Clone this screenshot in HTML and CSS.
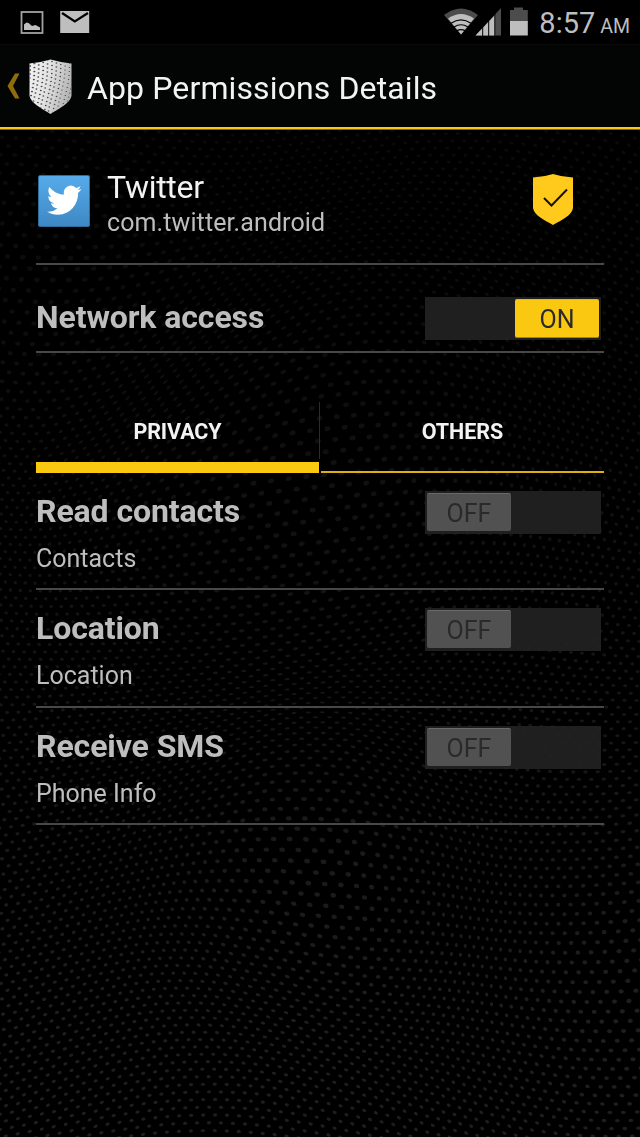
FILE: index.html
```html
<!DOCTYPE html>
<html lang="en">
<head>
    <meta charset="UTF-8">
    <title>App Permissions Details</title>
    <link rel="stylesheet" href="styles.css">
</head>
<body>
    <canvas id="dots" class="dots" width="640" height="1137"></canvas>
    <div class="statusbar">
        <svg class="status-image" width="24" height="24" viewBox="0 0 24 24">
            <rect x="1.500" y="1" width="21" height="21" fill="none" stroke="#a2a2a2" stroke-width="1.800"/>
            <path d="M4 19v-5.500l2.500-2 2 .4 3.500 3 3.500-1 4.500 2.600V19z" fill="#bebebe"/>
        </svg>
        <svg class="status-mail" width="30" height="23" viewBox="0 0 30 23">
            <rect x="0.200" y="0" width="29" height="22" fill="#bebebe"/>
            <path d="M2 2l12.800 8.500L28 2" fill="none" stroke="#000" stroke-width="2.300"/>
        </svg>
        <div class="status-right">
            <svg width="60" height="30" viewBox="0 0 60 30">
                <path d="M1 8Q18 -5 35 8L18 27.500z" fill="#4c4c4c"/>
                <path d="M5 11.500Q18 2.500 31 11.500L18 27.500z" fill="#bebebe"/>
                <path d="M8 16.300Q18 9.500 28 16.300M11 20Q18 15.500 25 20M14 23.600Q18 21.500 22 23.600" fill="none" stroke="#000" stroke-width="1.200"/>
                <path d="M32.500 28.500L58 1v27.500z" fill="#4c4c4c"/>
                <path d="M32.500 28.500L52 8V28.500z" fill="#bebebe"/>
                <path d="M39.700 18v12M45.700 12v18M51.800 5v25" stroke="#000" stroke-width="1"/>
            </svg>
            <svg class="battery" width="19" height="29" viewBox="0 0 19 29">
                <path d="M1 3h4V0.500h9V3h4.800v12H1z" fill="#4c4c4c"/>
                <rect x="1" y="14" width="17.800" height="14.500" fill="#bebebe"/>
            </svg>
            <span class="clock">8:57</span>
            <span class="ampm">AM</span>
        </div>
    </div>

    <div class="actionbar">
        <svg class="back" width="13" height="26" viewBox="0 0 13 26">
            <path d="M8 0.500h4.500L6 13l6.500 12.500H8L0.500 13z" fill="#8e6e0c"/>
        </svg>
        <svg class="logo" width="44" height="56" viewBox="0 0 44 56">
            <defs>
                <linearGradient id="silver" x1="0" y1="0" x2="1" y2="0.300">
                    <stop offset="0" stop-color="#f4f4f4"/>
                    <stop offset="0.500" stop-color="#e2e2e2"/>
                    <stop offset="1" stop-color="#b4b4b4"/>
                </linearGradient>
                <clipPath id="shield">
                    <path d="M0.500 4.500Q12 3.500 21.500 0.500Q32 3.500 42.500 4.500V37C41 44 31 49 21.500 55C12 49 2 44 0.500 37z"/>
                </clipPath>
            </defs>
            <g clip-path="url(#shield)">
                <rect width="44" height="56" fill="url(#silver)"/>
                <g id="logo-dots"></g>
            </g>
        </svg>
        <h1>App Permissions Details</h1>
    </div>

    <main>
        <section class="app">
            <svg class="app-icon" width="52" height="52" viewBox="0 0 52 52">
                <defs>
                    <linearGradient id="sky" x1="0" y1="0" x2="0" y2="1">
                        <stop offset="0" stop-color="#57abea"/>
                        <stop offset="1" stop-color="#3d88c4"/>
                    </linearGradient>
                </defs>
                <rect x="0.500" y="0.500" width="51" height="51" rx="1.500" fill="url(#sky)" stroke="#2f6c9e"/>
                <g transform="translate(9 7.200) scale(1.440 1.500)">
                    <path d="M23.950 4.570a10 10 0 0 1-2.820.770 4.960 4.960 0 0 0 2.160-2.720c-.950.560-2 .950-3.130 1.180a4.920 4.920 0 0 0-8.380 4.480C7.690 8.090 4.070 6.130 1.640 3.160a4.820 4.820 0 0 0-.670 2.480c0 1.710.870 3.210 2.190 4.100a4.900 4.900 0 0 1-2.230-.620v.060a4.920 4.920 0 0 0 3.950 4.830 5 5 0 0 1-2.210.080 4.940 4.940 0 0 0 4.600 3.420A9.870 9.870 0 0 1 0 19.540a13.990 13.990 0 0 0 7.550 2.210c9.050 0 14-7.500 14-13.980 0-.210 0-.420-.020-.630a9.940 9.940 0 0 0 2.420-2.570z" fill="#fff"/>
                </g>
            </svg>
            <div class="app-text">
                <div class="app-name">Twitter</div>
                <div class="app-package">com.twitter.android</div>
            </div>
            <svg class="trusted" width="42" height="52" viewBox="0 0 42 52">
                <path d="M1 3.500Q12 3 21 0Q30 3 41 3.500V34C40 41 30 46 21 51C12 46 2 41 1 34z" fill="#ffca1c"/>
                <path d="M12 24l7.500 7.500L35 15.500" fill="none" stroke="#15140c" stroke-width="2"/>
            </svg>
        </section>

        <section class="network">
            <h2>Network access</h2>
            <div class="switch on"><span class="thumb">ON</span></div>
        </section>

        <nav class="tabs">
            <div class="tab active">PRIVACY</div>
            <div class="separator"></div>
            <div class="tab">OTHERS</div>
        </nav>

        <section class="permission">
            <div>
                <h2>Read contacts</h2>
                <p>Contacts</p>
            </div>
            <div class="switch"><span class="thumb">OFF</span></div>
        </section>
        <section class="permission">
            <div>
                <h2>Location</h2>
                <p>Location</p>
            </div>
            <div class="switch"><span class="thumb">OFF</span></div>
        </section>
        <section class="permission">
            <div>
                <h2>Receive SMS</h2>
                <p>Phone Info</p>
            </div>
            <div class="switch"><span class="thumb">OFF</span></div>
        </section>
    </main>
    <script src="script.js"></script>
</body>
</html>
```
FILE: styles.css
```css
body {
    margin: 0;
    height: 1137px;
    overflow: hidden;
    background-color: #000;
    color: #bebebe;
    font-family: Roboto, "Liberation Sans", sans-serif;
}

h1, h2, p {
    margin: 0;
    white-space: nowrap;
}

/* dotted wallpaper behind everything */
.dots {
    position: absolute;
    top: 0;
    left: 0;
    z-index: -1;
}

.statusbar {
    display: flex;
    box-sizing: border-box;
    height: 45px;
    padding-left: 20px;
    background-color: #000;
    border-bottom: 1px solid #0b0b0b;
}

.status-image {
    margin-top: 11px;
}

.status-mail {
    margin: 11px 0 0 16px;
}

.status-right {
    display: flex;
    margin-left: auto;
    padding: 7px 10px 0 0;
}

.battery {
    margin-left: 6px;
}

.clock {
    margin-left: 11px;
    font-size: 29px;
    line-height: 32px;
}

.ampm {
    margin-left: 5px;
    font-size: 19.500px;
    line-height: 39px;
}

.actionbar {
    display: flex;
    align-items: center;
    height: 82px;
    padding-left: 7px;
    background-color: #030404;
    border-bottom: 2px solid #fac711;
    box-shadow: 0 1px 0 #806409;
}

.logo {
    margin: 1px 0 0 9px;
}

.actionbar h1 {
    margin: 3px 0 0 14px;
    color: #f3f3f3;
    font-size: 32px;
    font-weight: 400;
    letter-spacing: 0.120px;
    line-height: 38px;
}

main {
    padding: 0 36px;
}

.app {
    display: flex;
    box-sizing: border-box;
    height: 136px;
    padding: 46px 30px 0 2px;
    border-bottom: 2px solid #484848;
}

.app-text {
    margin: -7px auto 0 17px;
}

.app-name {
    color: #f3f3f3;
    font-size: 32px;
    letter-spacing: -0.300px;
    line-height: 38px;
}

.app-package {
    font-size: 25px;
    letter-spacing: 0.100px;
    line-height: 33px;
}

.trusted {
    margin-top: -1px;
}

.network {
    display: flex;
    justify-content: space-between;
    box-sizing: border-box;
    height: 88px;
    padding: 32px 3px 0 0;
    border-bottom: 2px solid #484848;
}

h2 {
    font-size: 32px;
    font-weight: 700;
    letter-spacing: -0.100px;
    line-height: 40px;
}

.switch {
    display: flex;
    box-sizing: border-box;
    width: 176px;
    height: 43px;
    padding: 2px;
    background-color: rgba(34, 34, 34, 0.900);
}

.thumb {
    box-sizing: border-box;
    width: 84px;
    height: 38px;
    border-top: 1px solid #6a6a6a;
    border-radius: 2px;
    background-color: rgba(84, 84, 84, 0.950);
    color: #2a2a2a;
    font-size: 25px;
    line-height: 40px;
    text-align: center;
}

.on {
    justify-content: flex-end;
}

.on .thumb {
    height: 39px;
    border-top-color: #d5b74a;
    border-bottom: 1px solid #ab8509;
    background-color: #fac711;
}

.tabs {
    display: flex;
    height: 71px;
    margin-top: 49px;
}

.tab {
    box-sizing: border-box;
    flex: 1;
    border-bottom: 2px solid #dfaf0b;
    color: #f3f3f3;
    font-size: 21.500px;
    font-weight: 700;
    line-height: 59px;
    text-align: center;
}

.tab.active {
    border-bottom: 11px solid #fac711;
    letter-spacing: -0.100px;
}

.separator {
    width: 2px;
    height: 57px;
    background: linear-gradient(to right, #2c2c2c 50%, transparent 50%);
}

.permission {
    display: flex;
    justify-content: space-between;
    box-sizing: border-box;
    height: 117.300px;
    padding: 18px 3px 0 0;
    border-bottom: 2px solid #484848;
}

.permission p {
    margin-top: 8px;
    font-size: 25px;
    line-height: 39px;
}
```
FILE: script.js
```js
const canvas = document.getElementById('dots');
const ctx = canvas.getContext('2d');

// places where the dotted sheet bulges towards the viewer
const bulges = [
    { x: 300, y: 480, size: 190, force: 0.5 },
    { x: 320, y: 880, size: 130, force: 0.4 },
    { x: 70, y: 260, size: 160, force: 0.4 },
    { x: 690, y: 960, size: 190, force: 0.3 },
];

function warp(u, v) {
    let x = u + 12 * Math.sin(v / 140);
    let y = v + 22 * Math.sin(u / 110 + v / 400);
    for (const b of bulges) {
        const dx = u - b.x;
        const dy = v - b.y;
        const k = b.force * Math.exp(-(dx * dx + dy * dy) / (b.size * b.size));
        x += dx * k;
        y += dy * k;
    }
    return [x, y];
}

for (let row = -16; row < 200; row++) {
    for (let col = -12; col < 80; col++) {
        const u = (col + (row % 2) / 2) * 12;
        const v = row * 8;
        const [x, y] = warp(u, v);
        if (y < 130) continue;
        const [ax, ay] = warp(u + 1, v);
        const [bx, by] = warp(u, v + 1);
        const shade = Math.round(9 + 21 * Math.pow(Math.min(1, y / 1000), 1.5));
        ctx.setTransform(ax - x, ay - y, bx - x, by - y, x, y);
        ctx.fillStyle = `rgb(${shade}, ${shade}, ${shade})`;
        ctx.beginPath();
        ctx.ellipse(0, 0, 2.1, 1.7, 0, 0, Math.PI * 2);
        ctx.fill();
    }
}

// perforation on the shield logo
let holes = '';
for (let i = 0; i < 14; i++) {
    for (let j = 0; j < 15; j++) {
        const x = 1 + i * 4.4 - j * 0.5 + Math.sin(j / 3) * 1.5;
        const y = 3 + j * 4 + (i % 2) * 2 - i * 0.5;
        const r = Math.max(0.7, 1.1 - i * 0.04);
        holes += `<ellipse cx="${x}" cy="${y}" rx="${r}" ry="${r * 0.8}" fill="#4a4a4a"/>`;
    }
}
document.getElementById('logo-dots').innerHTML = holes;
```
